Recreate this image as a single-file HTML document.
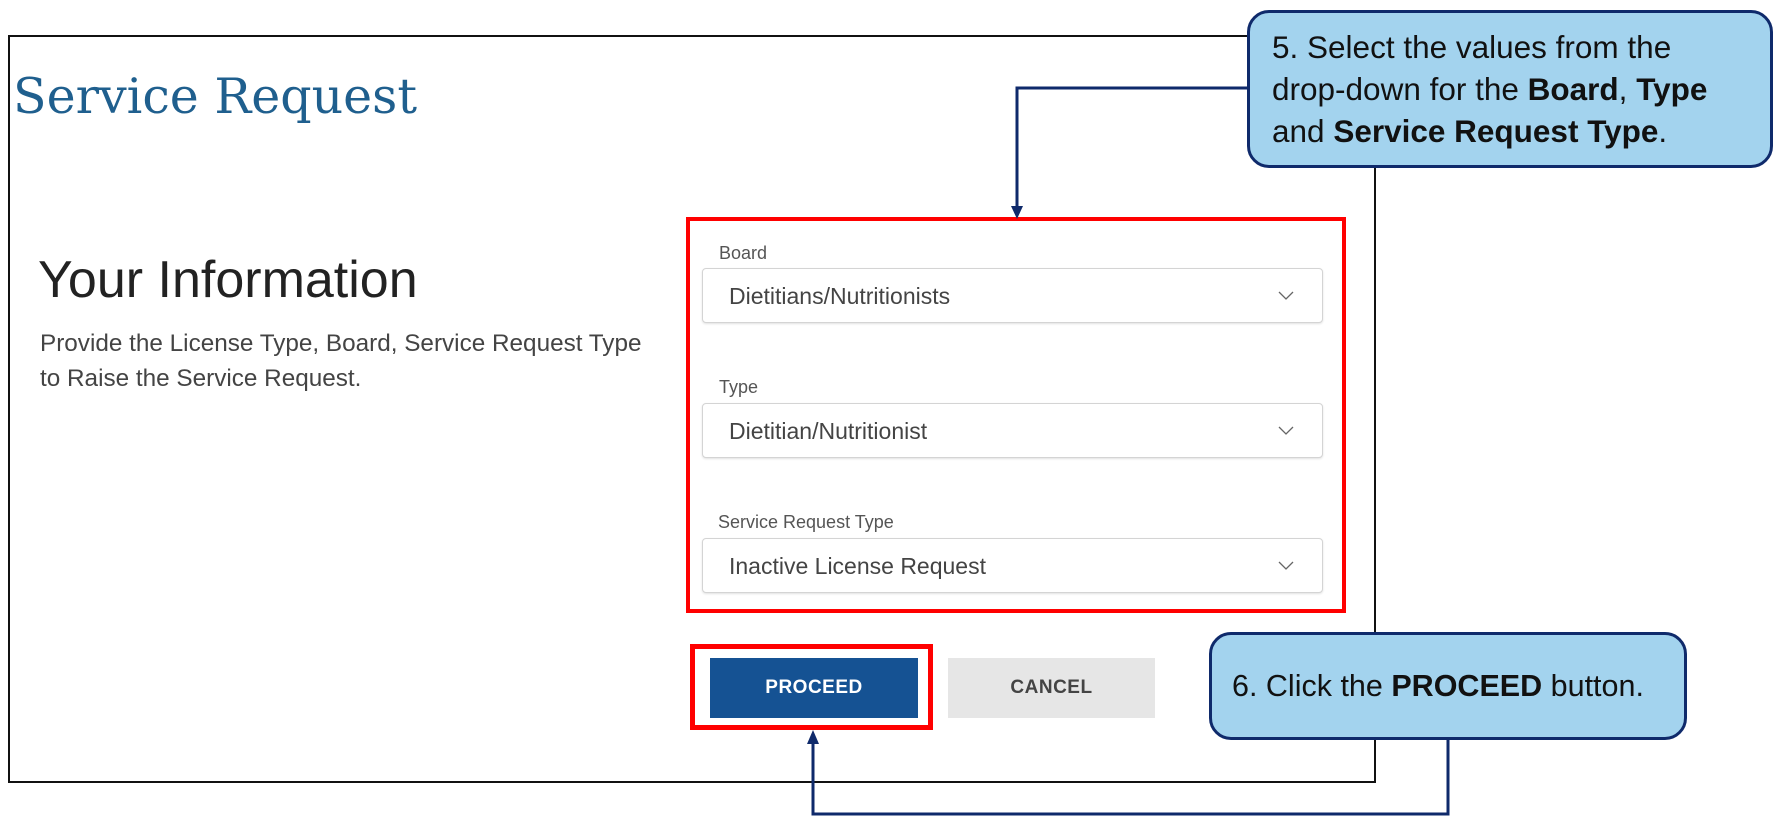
<!DOCTYPE html>
<html><head><meta charset="utf-8"><style>
*{margin:0;padding:0;box-sizing:border-box}
body{width:1782px;height:830px;background:#fff;position:relative;overflow:hidden;font-family:"Liberation Sans",Arial,sans-serif}
.a{position:absolute}
.frame{left:8px;top:35px;width:1368px;height:748px;border:2px solid #111}
.title{left:13px;top:68px;font-family:"DejaVu Serif",serif;font-size:49px;color:#1f5f8e;white-space:nowrap}
.h{left:38px;top:250px;font-size:52px;color:#222;white-space:nowrap}
.p{left:40px;top:326px;font-size:24.3px;color:#444;line-height:35px;white-space:nowrap}
.lbl{font-size:18px;color:#555;white-space:nowrap}
.sel{left:702px;width:621px;height:55px;border:1px solid #d4d4d4;border-radius:4px;box-shadow:0 1px 2px rgba(0,0,0,.12);background:#fff}
.sel span{position:absolute;left:26px;top:14px;font-size:23px;color:#444;white-space:nowrap}
.sel svg{position:absolute;right:28px;top:22px}
.red{border:4px solid #f00}
.btn{font-weight:bold;font-size:19px;text-align:center;line-height:60px;letter-spacing:.5px}
.call{background:#a3d3ee;border:3px solid #0f2a6b;border-radius:22px;font-size:31.5px;color:#111;line-height:42px;white-space:nowrap}
</style></head><body>
<div class="a frame"></div>
<div class="a title">Service Request</div>
<div class="a h">Your Information</div>
<div class="a p">Provide the License Type, Board, Service Request Type<br>to Raise the Service Request.</div>

<div class="a lbl" style="left:719px;top:243px">Board</div>
<div class="a sel" style="top:268px"><span>Dietitians/Nutritionists</span><svg width="16" height="10"><path d="M1 1 L8 8 L15 1" fill="none" stroke="#666" stroke-width="1.3"/></svg></div>
<div class="a lbl" style="left:719px;top:377px">Type</div>
<div class="a sel" style="top:403px"><span>Dietitian/Nutritionist</span><svg width="16" height="10"><path d="M1 1 L8 8 L15 1" fill="none" stroke="#666" stroke-width="1.3"/></svg></div>
<div class="a lbl" style="left:718px;top:512px">Service Request Type</div>
<div class="a sel" style="top:538px"><span>Inactive License Request</span><svg width="16" height="10"><path d="M1 1 L8 8 L15 1" fill="none" stroke="#666" stroke-width="1.3"/></svg></div>
<div class="a red" style="left:686px;top:217px;width:660px;height:396px"></div>

<div class="a btn" style="left:710px;top:658px;width:208px;height:60px;background:#155293;color:#fff">PROCEED</div>
<div class="a btn" style="left:948px;top:658px;width:207px;height:60px;background:#e6e6e6;color:#444">CANCEL</div>
<div class="a red" style="left:690px;top:644px;width:243px;height:86px;border-width:5px"></div>

<svg class="a" style="left:0;top:0" width="1782" height="830">
<g fill="none" stroke="#0f2a6b" stroke-width="3">
<path d="M1250 88 H1017 V208"/>
<path d="M1448 740 V814 H813 V740"/>
</g>
<path d="M1011 206 L1023 206 L1017 219 Z" fill="#0f2a6b"/>
<path d="M807 744 L819 744 L813 730 Z" fill="#0f2a6b"/>
</svg>

<div class="a call" style="left:1247px;top:10px;width:526px;height:158px;padding:13px 0 0 22px">5. Select the values from the<br>drop-down for the <b>Board</b>, <b>Type</b><br>and <b>Service Request Type</b>.</div>
<div class="a call" style="left:1209px;top:632px;width:478px;height:108px;padding:30px 0 0 20px;font-size:30.5px">6. Click the <b>PROCEED</b> button.</div>
</body></html>
